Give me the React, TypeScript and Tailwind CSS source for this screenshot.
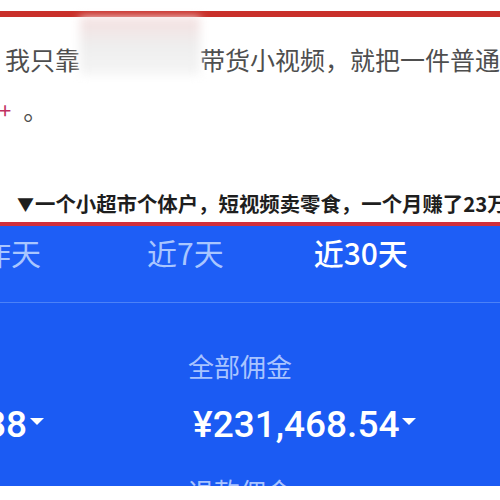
import React from "react";

const cjk = { fontFamily: '"Noto Sans CJK SC", "Noto Sans", sans-serif' };
const num = { fontFamily: 'Roboto, "Noto Sans CJK SC", sans-serif' };

function Caret() {
  return (
    <svg width="16" height="9" viewBox="0 0 16 9" className="ml-[2px] mt-[-6px] shrink-0">
      <path d="M1 1 L15 1 L8 8 Z" fill="#ffffff" />
    </svg>
  );
}

export default function App() {
  return (
    <div className="w-[500px] h-[500px] bg-white overflow-hidden flex flex-col" style={cjk}>
      <div className="h-[11px] shrink-0 bg-white" />
      <div className="h-[6px] shrink-0 bg-[#c9302a]" />
      <div className="h-[17px] shrink-0" />
      {/* body text */}
      <div className="pl-[5px] text-[25px] leading-[50px] text-[#4e4e4e] whitespace-nowrap h-[100px] shrink-0">
        <div className="flex items-center h-[50px]">
          <span>我只靠</span>
          <span className="inline-block w-[123px] h-[58px] -translate-y-[13px] bg-gradient-to-b from-[#f4e0e0] via-[#eeeeee] to-[#f5f5f5] blur-[5px]" />
          <span>带货小视频，就把一件普通</span>
        </div>
        <div className="flex items-center h-[50px] ml-[-6px]">
          <span className="text-[#c03060] text-[22px]">+</span>
          <span className="ml-[12px]">。</span>
        </div>
      </div>
      <div className="h-[52px] shrink-0" />
      {/* caption */}
      <div className="h-[36px] shrink-0 pl-[17px] flex items-center whitespace-nowrap text-[20.4px] font-bold text-[#1e1e1e] leading-none pb-[2px]">
        <span className="text-[17px] mr-[1px]">▼</span>
        <span>一个小超市个体户，短视频卖零食，一个月赚了23万</span>
      </div>
      <div className="h-[4px] shrink-0 bg-[#d0303c]" />
      {/* blue panel */}
      <div className="h-[260px] shrink-0 bg-[#1e5ef6] flex flex-col overflow-hidden">
        <div className="h-[76px] shrink-0 flex items-center whitespace-nowrap text-[30px] leading-none pb-[24px]">
          <span className="ml-[-19px] text-[#a9c6ff]">昨天</span>
          <span className="ml-[106px] text-[#a9c6ff]">近7天</span>
          <span className="ml-[90px] text-white font-medium">近30天</span>
        </div>
        <div className="h-[1px] shrink-0 bg-[#4c82f7]" />
        <div className="flex-1 flex flex-col bg-[#1b5bf3]">
          <div className="h-[46px] shrink-0" />
          <div className="pl-[188px] text-[26px] leading-[34px] text-[#a9c4ff] shrink-0">全部佣金</div>
          <div className="h-[21px] shrink-0" />
          <div className="flex items-center h-[40px] shrink-0">
            <div className="w-[45px] flex justify-end shrink-0">
              <div className="flex items-center whitespace-nowrap text-white text-[37px] leading-none font-medium" style={num}>
                <span>¥8,572.88</span>
                <Caret />
              </div>
            </div>
            <div className="ml-[148px] flex items-center whitespace-nowrap text-white text-[37px] leading-none font-medium" style={num}>
              <span>¥231,468.54</span>
              <Caret />
            </div>
          </div>
          <div className="h-[30px] shrink-0" />
          <div className="pl-[188px] text-[26px] leading-[34px] text-[#a9c4ff] shrink-0">退款佣金</div>
        </div>
      </div>
      <div className="flex-1 bg-white" />
    </div>
  );
}
